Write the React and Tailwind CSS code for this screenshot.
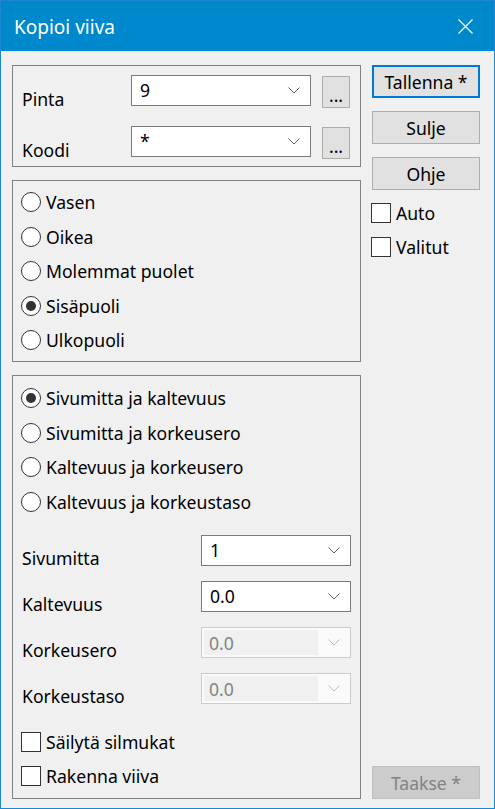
import React from 'react'

// Windows-style "Kopioi viiva" dialog

const Chevron = ({ muted }) => (
  <svg width="12" height="7" viewBox="0 0 12 7" className={muted ? 'text-[#bdbdbd]' : 'text-[#5f5f5f]'}>
    <path d="M0.5 0.5 L6 6 L11.5 0.5" fill="none" stroke="currentColor" strokeWidth="1" />
  </svg>
)

function Combo({ value, disabled, className = '' }) {
  if (disabled) {
    return (
      <div className={`flex h-[31px] items-center border border-[#cccccc] bg-[#fafafa] pl-[2px] pr-[10px] ${className}`}>
        <div className="flex h-[25px] flex-1 items-center bg-[#f0f0f0] pl-[5px] text-[#838383]">{value}</div>
        <div className="ml-[10px] flex items-center"><Chevron muted /></div>
      </div>
    )
  }
  return (
    <div className={`flex h-[31px] items-center justify-between border border-[#7a7a7a] bg-white pl-[8px] pr-[10px] ${className}`}>
      <span className="-mt-[2px]">{value}</span>
      <Chevron />
    </div>
  )
}

const DotsButton = () => (
  <div className="mt-[1px] flex h-[32px] w-[28px] items-end justify-center border border-[#adadad] bg-[#e1e1e1] pb-[3px] leading-[18px]">
    ...
  </div>
)

function Radio({ label, checked }) {
  return (
    <div className="flex h-[34.5px] items-center">
      <div className="flex h-[20px] w-[20px] items-center justify-center rounded-full border border-[#333333] bg-white">
        {checked && <div className="h-[10px] w-[10px] rounded-full bg-[#333333]" />}
      </div>
      <span className="ml-[5px]">{label}</span>
    </div>
  )
}

function Check({ label, className = '' }) {
  return (
    <div className={`flex items-center ${className}`}>
      <div className="h-[20px] w-[20px] border border-[#333333] bg-white" />
      <span className="ml-[5px]">{label}</span>
    </div>
  )
}

function Button({ children, variant = 'normal', className = '' }) {
  const styles = {
    primary: 'border-2 border-[#0078d7] bg-[#e1e1e1] text-black',
    normal: 'border border-[#adadad] bg-[#e1e1e1] text-black',
    disabled: 'border border-[#bfbfbf] bg-[#cccccc] text-[#838383]',
  }
  return (
    <div className={`flex h-[33px] w-[108px] items-center justify-center ${styles[variant]} ${className}`}>
      {children}
    </div>
  )
}

function FieldRow({ label, children, className = '' }) {
  return (
    <div className={`flex h-[31px] items-start ${className}`}>
      <span className="mt-[11px] w-[179px]">{label}</span>
      {children}
    </div>
  )
}

export default function App() {
  return (
    <div className="flex h-[809px] w-[495px] flex-col border border-[#1c86d1] bg-[#f0f0f0] font-['Noto_Sans',sans-serif] text-[17.6px] leading-[24px] text-black">
      <div className="flex h-[50px] items-start justify-between bg-[#0088cc] pl-[13px] pr-[21px] pt-[12px]">
        <span className="text-[19px] leading-[28px] text-white">Kopioi viiva</span>
        <svg width="15" height="15" viewBox="0 0 15 15" className="mt-[6px] text-white">
          <path d="M0.5 0.5 L14.5 14.5 M14.5 0.5 L0.5 14.5" stroke="currentColor" strokeWidth="1.2" />
        </svg>
      </div>

      <div className="flex flex-1 gap-[11px] pl-[11px] pt-[14px]">
        <div className="flex w-[349px] flex-col">
          <div className="h-[102px] border border-[#808080] pl-[9px] pt-[9px]">
            <div className="flex items-start">
              <span className="mt-[12px] w-[109px]">Pinta</span>
              <Combo value="9" className="w-[180px]" />
              <div className="ml-[11px]"><DotsButton /></div>
            </div>
            <div className="mt-[15px] flex items-start">
              <span className="mt-[12px] w-[109px]">Koodi</span>
              <Combo value="*" className="w-[180px]" />
              <div className="ml-[11px]"><DotsButton /></div>
            </div>
          </div>

          <div className="mt-[13px] h-[182px] border border-[#808080] pl-[8px] pt-[4px]">
            <Radio label="Vasen" />
            <Radio label="Oikea" />
            <Radio label="Molemmat puolet" />
            <Radio label="Sisäpuoli" checked />
            <Radio label="Ulkopuoli" />
          </div>

          <div className="mt-[13px] h-[424px] border border-[#808080] pl-[8px] pt-[5px]">
            <Radio label="Sivumitta ja kaltevuus" checked />
            <Radio label="Sivumitta ja korkeusero" />
            <Radio label="Kaltevuus ja korkeusero" />
            <Radio label="Kaltevuus ja korkeustaso" />

            <div className="pl-[1px]">
              <FieldRow label="Sivumitta" className="mt-[16px]">
                <Combo value="1" className="w-[150px]" />
              </FieldRow>
              <FieldRow label="Kaltevuus" className="mt-[15px]">
                <Combo value="0.0" className="w-[150px]" />
              </FieldRow>
              <FieldRow label="Korkeusero" className="mt-[15px]">
                <Combo value="0.0" disabled className="w-[150px]" />
              </FieldRow>
              <FieldRow label="Korkeustaso" className="mt-[15px]">
                <Combo value="0.0" disabled className="w-[150px]" />
              </FieldRow>
            </div>

            <Check label="Säilytä silmukat" className="mt-[21px] h-[34px]" />
            <Check label="Rakenna viiva" className="h-[34px]" />
          </div>
        </div>

        <div className="flex w-[108px] flex-col pb-[9px]">
          <Button variant="primary">Tallenna *</Button>
          <Button className="mt-[13px]">Sulje</Button>
          <Button className="mt-[13px]">Ohje</Button>
          <Check label="Auto" className="mt-[13px] h-[20px] -ml-[1px]" />
          <Check label="Valitut" className="mt-[14px] h-[20px] -ml-[1px]" />
          <Button variant="disabled" className="mt-auto">Taakse *</Button>
        </div>
      </div>
    </div>
  )
}
